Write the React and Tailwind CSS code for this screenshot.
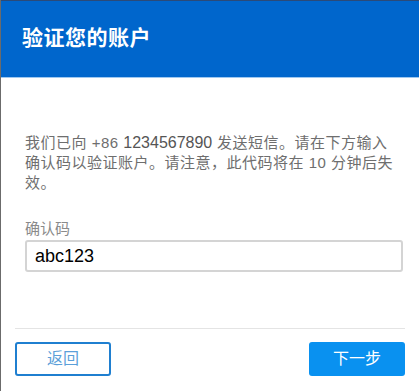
export default function App() {
  return (
    <div
      className="w-[419px] h-[391px] bg-white border-l border-[#6b6b6b] flex flex-col overflow-hidden"
      style={{ fontFamily: '"Liberation Sans", "Noto Sans CJK SC", sans-serif' }}
    >
      {/* Header */}
      <div className="h-[78px] bg-[#0066cc] border-t border-[#2b4a78] border-b border-b-[#9fc8f0] flex items-center pl-[21px] pb-[2px]">
        <h1 className="text-white text-[21px] font-bold tracking-[0.5px]">验证您的账户</h1>
      </div>

      {/* Body */}
      <div className="flex-1 px-[24px] pt-[55px]">
        <p className="text-[15px] leading-[20px] text-[#6e6e6e] tracking-[0.5px]">
          我们已向 +86 <span className="text-[#555] text-[16px] tracking-normal">1234567890</span> 发送短信。请在下方输入确认码以验证账户。请注意，此代码将在 10 分钟后失效。
        </p>

        <div className="mt-[26px]">
          <label className="block text-[15px] leading-[20px] text-[#8a8a8a]">确认码</label>
          <input
            readOnly
            value="abc123"
            className="mt-[1px] w-[378px] h-[32px] border-2 border-[#d4d4d4] rounded-[3px] px-[8px] text-[18px] text-black outline-none"
          />
        </div>
      </div>

      {/* Footer */}
      <div className="mx-[14px] border-t border-[#e4e4e4] h-[63px] flex items-center justify-between pb-[2px]">
        <button className="w-[96px] h-[34px] border-2 border-[#1f7fd0] rounded-[3px] text-[16px] text-[#5b9fd9] bg-white">
          返回
        </button>
        <button className="w-[96px] h-[34px] rounded-[3px] text-[16px] text-white bg-[#0991f0]">
          下一步
        </button>
      </div>
    </div>
  );
}
